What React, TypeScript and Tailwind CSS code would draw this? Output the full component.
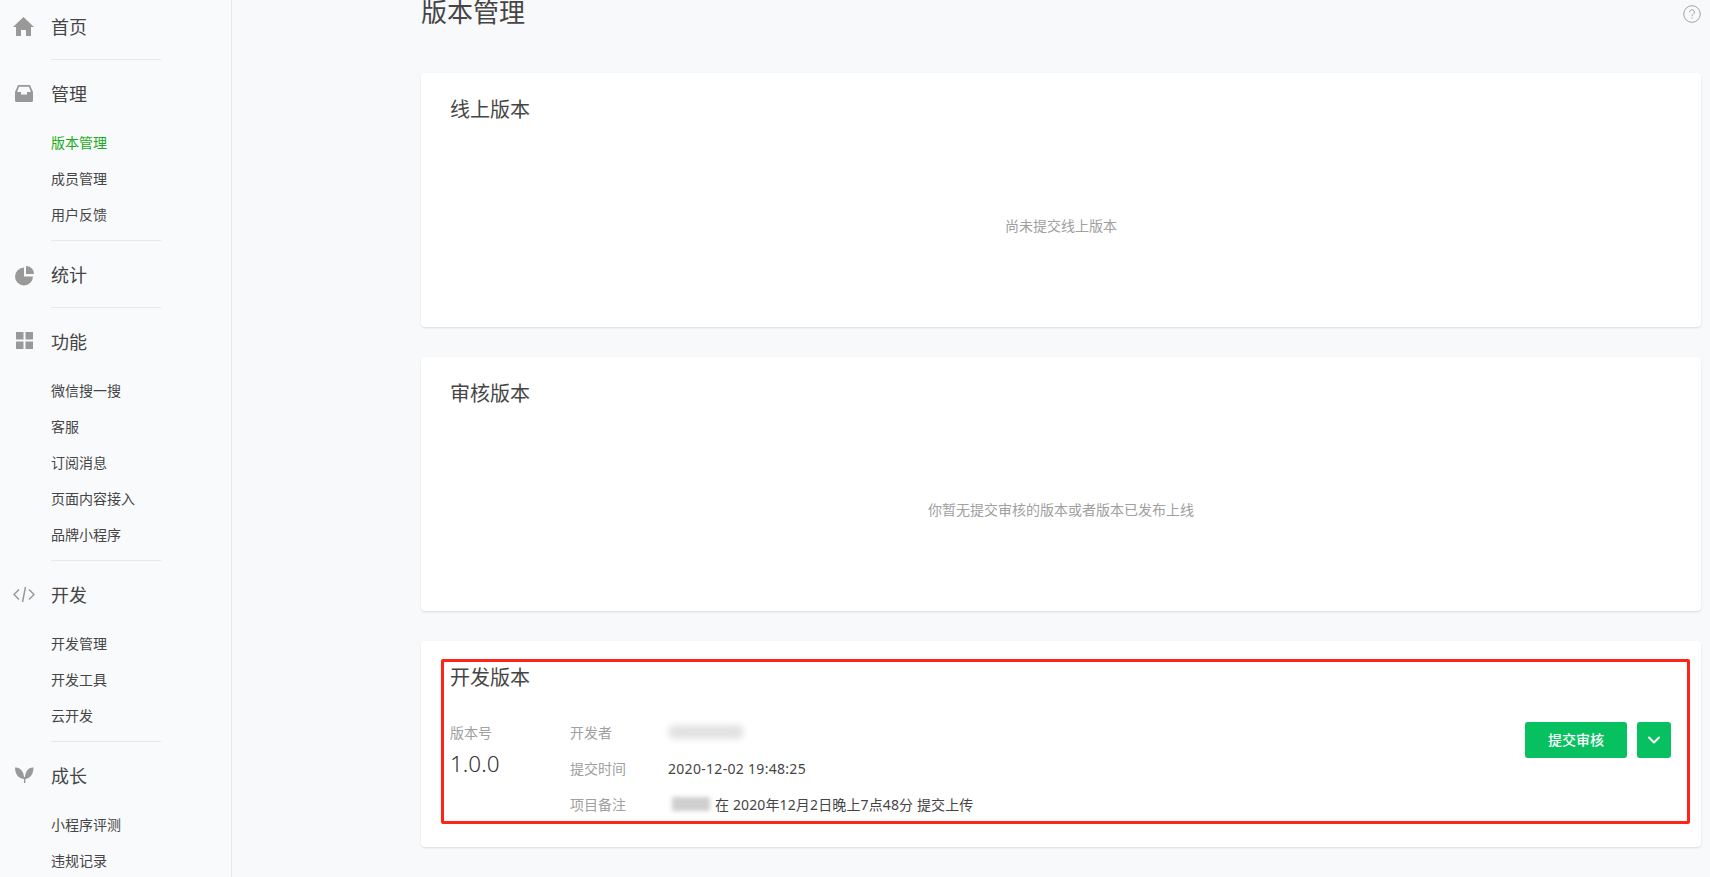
import { ChevronDown } from "lucide-react";
import type { ReactNode } from "react";

const ICON_FILL = "#999999";

function HomeIcon() {
  return (
    <svg width="22" height="22" viewBox="0 0 22 22" fill={ICON_FILL}>
      <path d="M10.5 1 21 11h-3v9h-5v-6H8v6H3v-9H0Z" />
    </svg>
  );
}

function InboxIcon() {
  return (
    <svg width="22" height="22" viewBox="0 0 22 22" fill={ICON_FILL}>
      <path
        fillRule="evenodd"
        d="M5 2h12l3 7v8.500a1.500 1.500 0 0 1-1.500 1.500h-15A1.500 1.500 0 0 1 2 17.500V9ZM6 3.800 4.200 9H8v2.500h6V9h3.800L16 3.800Z"
      />
    </svg>
  );
}

function PieIcon() {
  return (
    <svg width="22" height="22" viewBox="0 0 22 22" fill={ICON_FILL}>
      <path d="M11 3.500A9 9 0 1 0 20 12.500h-9Z" />
      <path d="M13 2a8 8 0 0 1 8 8h-8Z" />
    </svg>
  );
}

function GridIcon() {
  return (
    <svg width="22" height="22" viewBox="0 0 22 22" fill={ICON_FILL}>
      <rect x="3" y="1" width="7.500" height="7.500" />
      <rect x="12.500" y="1" width="7.500" height="7.500" />
      <rect x="3" y="10.500" width="7.500" height="7.500" />
      <rect x="12.500" y="10.500" width="7.500" height="7.500" />
    </svg>
  );
}

function CodeIcon() {
  return (
    <svg width="22" height="22" viewBox="0 0 22 22" fill="none" stroke={ICON_FILL} strokeWidth="1.500">
      <path d="M6 5.500 1 10.500l5 5M16 5.500l5 5-5 5M12.500 3l-3 15" />
    </svg>
  );
}

function SproutIcon() {
  return (
    <svg width="22" height="22" viewBox="0 0 22 22" fill={ICON_FILL}>
      <path d="M2 2.500C7 2 11 6 11.200 14 5.500 14 2 9 2 2.500Z" />
      <path d="M20.500 2.500C15.500 2 12 6 11.800 14 17 14 20.500 9 20.500 2.500Z" />
      <rect x="11" y="12" width="1.400" height="6" />
    </svg>
  );
}

function HelpIcon() {
  return (
    <svg width="18" height="18" viewBox="0 0 18 18" fill="none" stroke="#a3a3a3" strokeWidth="1">
      <circle cx="9" cy="9" r="8.300" />
      <path d="M6.600 7.200a2.400 2.400 0 1 1 3.700 2c-.9.600-1.300 1-1.300 2.100" />
      <path d="M9 12.600v1.200" />
    </svg>
  );
}

type NavSection = {
  title: string;
  icon: ReactNode;
  items?: string[];
};

const NAV: NavSection[] = [
  { title: "首页", icon: <HomeIcon /> },
  { title: "管理", icon: <InboxIcon />, items: ["版本管理", "成员管理", "用户反馈"] },
  { title: "统计", icon: <PieIcon /> },
  { title: "功能", icon: <GridIcon />, items: ["微信搜一搜", "客服", "订阅消息", "页面内容接入", "品牌小程序"] },
  { title: "开发", icon: <CodeIcon />, items: ["开发管理", "开发工具", "云开发"] },
  { title: "成长", icon: <SproutIcon />, items: ["小程序评测", "违规记录"] },
];

function Sidebar() {
  return (
    <aside className="w-[232px] shrink-0 border-r border-[#e7e8eb] bg-[#f9fafc] pt-[9px]">
      {NAV.map((section, i) => (
        <div key={section.title}>
          {i > 0 && <div className="mb-[16px] ml-[51px] h-px w-[110px] bg-[#e7e8eb]" />}
          <div className="flex h-[36px] items-center pl-[13px]">
            <span className="w-[38px] shrink-0">{section.icon}</span>
            <span className="text-[18px] text-[#454545]">{section.title}</span>
          </div>
          {section.items ? (
            <ul className="mt-[12px] mb-[8px]">
              {section.items.map((item) => (
                <li
                  key={item}
                  className={`flex h-[36px] items-center pl-[51px] text-[14px] ${
                    item === "版本管理" ? "text-[#1aad19]" : "text-[#454545]"
                  }`}
                >
                  {item}
                </li>
              ))}
            </ul>
          ) : (
            <div className="h-[14px]" />
          )}
        </div>
      ))}
    </aside>
  );
}

function EmptyCard({ title, hint }: { title: string; hint: string }) {
  return (
    <section className="flex h-[254px] flex-col rounded-[4px] bg-white px-[29px] pt-[23px] shadow-[0_1px_2px_rgba(0,0,0,0.12)]">
      <h2 className="text-[20px] leading-[28px] text-[#454545]">{title}</h2>
      <div className="flex flex-1 items-center justify-center pb-px text-[14px] text-[#a0a0a0]">{hint}</div>
    </section>
  );
}

function InfoRow({ label, children }: { label: string; children: ReactNode }) {
  return (
    <div className="flex h-[36px] items-center text-[14px]">
      <span className="w-[98px] shrink-0 text-[#a0a0a0]">{label}</span>
      {children}
    </div>
  );
}

function DevCard() {
  return (
    <section className="relative h-[206px] rounded-[4px] bg-white pt-[23px] pr-[30px] pl-[29px] shadow-[0_1px_2px_rgba(0,0,0,0.12)]">
      <h2 className="text-[20px] leading-[28px] text-[#454545]">开发版本</h2>
      <div className="mt-[22px] flex">
        <div className="w-[120px] shrink-0">
          <div className="flex h-[36px] items-center text-[14px] text-[#a0a0a0]">版本号</div>
          <div className="mt-[2px] text-[22.500px] leading-[24px] font-light text-[#353535]">1.0.0</div>
        </div>
        <div>
          <InfoRow label="开发者">
            <span className="h-[14px] w-[76px] rounded-full bg-[#e2e2e2] blur-[3px]" />
          </InfoRow>
          <InfoRow label="提交时间">
            <span className="tracking-[0.3px] text-[#454545]">2020-12-02 19:48:25</span>
          </InfoRow>
          <InfoRow label="项目备注">
            <span className="mr-[5px] ml-[4px] h-[14px] w-[38px] bg-[#cfcfcf] blur-[2px]" />
            <span className="tracking-[0.13px] text-[#454545]">在 2020年12月2日晚上7点48分 提交上传</span>
          </InfoRow>
        </div>
        <div className="mt-[8px] ml-auto flex gap-[10px] self-start">
          <button className="h-[36px] w-[102px] rounded-[3px] bg-[#07c160] pb-px text-[14px] font-medium text-white">
            提交审核
          </button>
          <button className="flex h-[36px] w-[34px] items-center justify-center rounded-[3px] bg-[#07c160] text-white">
            <ChevronDown size={20} strokeWidth={2.4} />
          </button>
        </div>
      </div>
      {/* annotation box drawn over the card */}
      <div className="pointer-events-none absolute top-[18px] right-[11px] bottom-[23px] left-[20px] rounded-[2px] border-[3px] border-[#ff2417]" />
    </section>
  );
}

export default function App() {
  return (
    <div className="flex h-[877px] overflow-hidden bg-[#f8f9fb] [font-family:'Noto_Sans','Noto_Sans_CJK_SC',sans-serif]">
      <Sidebar />
      <main className="ml-[189px] flex-1 pr-[9px]">
        <header className="mt-[-6px] mb-[43px] flex h-[36px] items-start justify-between">
          <h1 className="text-[26px] leading-[36px] text-[#454545]">版本管理</h1>
          <span className="mt-[11px]">
            <HelpIcon />
          </span>
        </header>
        <div className="flex flex-col gap-[30px]">
          <EmptyCard title="线上版本" hint="尚未提交线上版本" />
          <EmptyCard title="审核版本" hint="你暂无提交审核的版本或者版本已发布上线" />
          <DevCard />
        </div>
      </main>
    </div>
  );
}
